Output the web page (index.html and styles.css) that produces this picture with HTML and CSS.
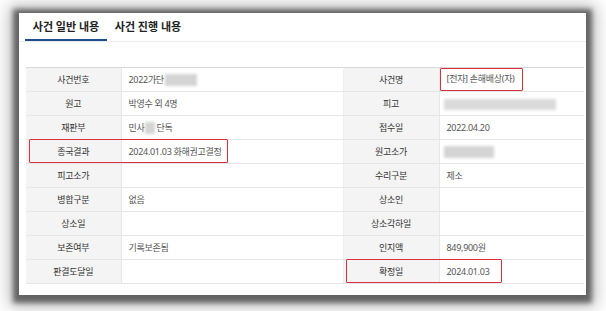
FILE: index.html
```html
<!DOCTYPE html>
<html>
<head>
    <meta charset="utf-8">
    <link rel="stylesheet" href="styles.css">
</head>
<body>
    <div class="frame">
        <div class="card">
            <div class="tabs">
                <div class="tab active">사건 일반 내용</div>
                <div class="tab">사건 진행 내용</div>
            </div>

            <div class="table-wrap">
                <table class="info">
                    <colgroup>
                        <col class="c-label">
                        <col class="c-value">
                        <col class="c-label2">
                        <col class="c-value2">
                    </colgroup>
                    <tr>
                        <th>사건번호</th>
                        <td>2022가단<span class="blur b-num"></span></td>
                        <th>사건명</th>
                        <td><span class="mark-name">[전자] 손해배상(자)</span></td>
                    </tr>
                    <tr>
                        <th>원고</th>
                        <td>박영수 외 4명</td>
                        <th>피고</th>
                        <td><span class="blur b-def"></span></td>
                    </tr>
                    <tr>
                        <th>재판부</th>
                        <td>민사<span class="blur b-court"></span>단독</td>
                        <th>접수일</th>
                        <td>2022.04.20</td>
                    </tr>
                    <tr>
                        <th>종국결과</th>
                        <td>2024.01.03 화해권고결정</td>
                        <th>원고소가</th>
                        <td><span class="blur b-amt"></span></td>
                    </tr>
                    <tr>
                        <th>피고소가</th>
                        <td></td>
                        <th>수리구분</th>
                        <td>제소</td>
                    </tr>
                    <tr>
                        <th>병합구분</th>
                        <td>없음</td>
                        <th>상소인</th>
                        <td></td>
                    </tr>
                    <tr>
                        <th>상소일</th>
                        <td></td>
                        <th>상소각하일</th>
                        <td></td>
                    </tr>
                    <tr>
                        <th>보존여부</th>
                        <td>기록보존됨</td>
                        <th>인지액</th>
                        <td>849,900원</td>
                    </tr>
                    <tr>
                        <th>판결도달일</th>
                        <td></td>
                        <th>확정일</th>
                        <td>2024.01.03</td>
                    </tr>
                </table>

                <!-- red highlight boxes drawn over the table -->
                <div class="hl hl-result"></div>
                <div class="hl hl-confirm"></div>
            </div>
        </div>
    </div>
</body>
</html>
```

FILE: styles.css
```css
html, body {
    margin: 0;
    background: #fff;
}

body {
    font-family: "Noto Sans", "Noto Sans CJK KR", sans-serif;
    width: 606px;
    height: 311px;
    overflow: hidden;
}

.frame {
    padding: 13px 20px 16px 19px;
}

.card {
    width: 567px;
    height: 282px;
    background: #fff;
    box-shadow: 0 2px 5px 6px rgba(0, 0, 0, 0.5), 0 2px 16px 10px rgba(0, 0, 0, 0.25);
}

.tabs {
    display: flex;
    height: 28px;
    padding-left: 6px;
    border-bottom: 1px solid #ececec;
}

.tab {
    width: 82px;
    text-align: center;
    font-size: 11px;
    font-weight: bold;
    color: #222;
    line-height: 27px;
    box-sizing: border-box;
}

.tab.active {
    border-bottom: 2px solid #1f4e8c;
}

.table-wrap {
    position: relative;
    margin: 25px 0 0 7px;
    width: 558px;
}

.info {
    width: 558px;
    border-collapse: collapse;
    table-layout: fixed;
    font-size: 9px;
    letter-spacing: -0.3px;
    border-top: 1px solid #d8d8d8;
}

.c-label { width: 95px; }
.c-value { width: 222px; }
.c-label2 { width: 96px; }
.c-value2 { width: 145px; }

.info th,
.info td {
    height: 23px;
    padding: 0;
    border-bottom: 1px solid #e6e6e6;
    white-space: nowrap;
}

.info th {
    background: #f4f4f4;
    color: #333;
    font-weight: normal;
    text-align: center;
    border-right: 1px solid #e6e6e6;
}

.info td {
    color: #555;
    padding-left: 7px;
    border-right: 1px solid #efefef;
}

.info td:last-child {
    border-right: none;
}

.blur {
    display: inline-block;
    height: 12px;
    vertical-align: middle;
    background: #d4d4d4;
    filter: blur(1.5px);
}

.b-num { width: 32px; margin-left: 1px; }
.b-def { width: 112px; height: 11px; background: #dadada; margin-left: -3px; }
.b-court { width: 10px; margin: 0 1px; }
.b-amt { width: 50px; margin-left: -3px; }

.mark-name {
    display: inline-block;
    margin-left: -7px;
    padding: 2px 7px 3px 6px;
    border: 1.5px solid #d9303e;
    border-radius: 1px;
    line-height: 16px;
}

.hl {
    position: absolute;
    border: 1.5px solid #d9303e;
    border-radius: 1px;
}

.hl-result {
    left: 3px;
    top: 72px;
    width: 197px;
    height: 22px;
}

.hl-confirm {
    left: 320px;
    top: 192px;
    width: 154px;
    height: 22px;
}
```
